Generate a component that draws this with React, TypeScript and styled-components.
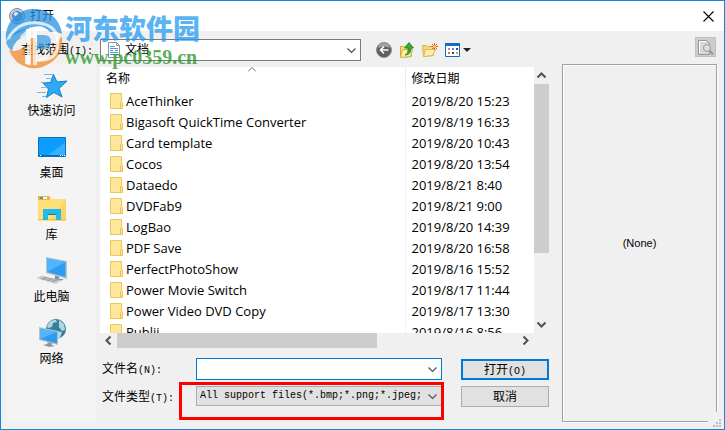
import React from "react";
import styled, { createGlobalStyle, css } from "styled-components";

const Global = createGlobalStyle`
  *, *::before, *::after { box-sizing: border-box; }
  body {
    margin: 0;
    font-family: "Noto Sans", "Noto Sans CJK SC", sans-serif;
    font-size: 12px;
    line-height: 16px;
    color: #000;
  }
  button, input, select { font: inherit; color: inherit; margin: 0; padding: 0; }
`;

const Dialog = styled.main`
  position: relative;
  display: flex;
  flex-direction: column;
  height: 100vh;
  min-height: 360px;
  border: 1px solid #1883d7;
  background: #f0f0f0;
`;

const TitleBar = styled.header`
  display: flex;
  align-items: center;
  gap: 5px;
  flex: none;
  height: 30px;
  padding: 0 10px 0 8px;
  background: #fff;
`;

const Title = styled.h1`
  flex: 1;
  margin: 0;
  font-size: 12px;
  font-weight: 400;
`;

const PlainButton = styled.button`
  display: flex;
  align-items: center;
  justify-content: center;
  border: 0;
  background: none;
`;

const Body = styled.div`
  display: flex;
  gap: 13px;
  flex: 1;
  min-height: 0;
  padding: 6px 7px 6px 6px;
`;

const Browser = styled.div`
  display: flex;
  flex-direction: column;
  gap: 2px;
  flex: 1;
  min-width: 0;
`;

const LookInBar = styled.div`
  display: flex;
  align-items: center;
  flex: none;
  padding-top: 2px;
`;

const Label = styled.label`
  white-space: nowrap;
`;

const LookInLabel = styled(Label)`
  flex: none;
  width: 93px;
  padding-left: 14px;
`;

const Mono = styled.span`
  font-family: "Liberation Mono", monospace;
  font-size: 10px;
  line-height: 10px;
`;

const Combo = styled.div<{ $tone: "plain" | "focus" | "grey" }>`
  display: flex;
  align-items: center;
  flex: 1;
  min-width: 0;
  min-height: ${(p) => (p.$tone === "grey" ? 20 : 22)}px;
  padding-right: 3px;
  border: 1px solid ${(p) => ({ plain: "#7a7a7a", focus: "#0078d7", grey: "#adadad" })[p.$tone]};
  background: ${(p) => (p.$tone === "grey" ? "#e1e1e1" : "#fff")};
`;

const field = css`
  flex: 1;
  min-width: 0;
  height: 18px;
  border: 0;
  outline: 0;
  background: none;
  appearance: none;
`;

const Select = styled.select<{ $mono?: boolean }>`
  ${field}
  padding-left: ${(p) => (p.$mono ? 3 : 4)}px;
  ${(p) => p.$mono && css`
    font-family: "Liberation Mono", monospace;
    font-size: 10px;
  `}
`;

const TextInput = styled.input`
  ${field}
  padding-left: 4px;
`;

const DocIcon = styled.svg`
  flex: none;
  margin-left: 6px;
`;

const Tools = styled.div`
  display: flex;
  align-items: center;
  gap: 7px;
  flex: none;
  width: 188px;
  padding-left: 15px;
`;

const Panes = styled.div`
  display: flex;
  gap: 4px;
  flex: 1;
  min-height: 0;
`;

const Places = styled.nav`
  display: flex;
  flex-direction: column;
  gap: 13px;
  flex: none;
  width: 89px;
  padding-top: 7px;
  background: #f4f4f4;
`;

const Place = styled(PlainButton)`
  flex-direction: column;
  gap: 1px;
`;

const Main = styled.div`
  display: flex;
  flex-direction: column;
  flex: 1;
  min-width: 0;
  padding-top: 4px;
`;

const ListFrame = styled.div`
  display: grid;
  grid-template: minmax(0, 1fr) 15px / minmax(0, 1fr) 15px;
  flex: 1;
  min-height: 0;
`;

const ListView = styled.div`
  overflow: hidden;
  background: #fff;
`;

const Files = styled.table`
  width: 100%;
  border-collapse: collapse;
  table-layout: fixed;
`;

const Head = styled.th<{ $sorted?: boolean }>`
  position: relative;
  height: 23px;
  padding: 0 6px;
  font-weight: 400;
  text-align: left;
  width: ${(p) => (p.$sorted ? "auto" : "129px")};
  border-left: ${(p) => (p.$sorted ? "0" : "1px solid #e3eef8")};
`;

const SortMark = styled.svg`
  position: absolute;
  top: 0;
  left: 50%;
  transform: translateX(-50%);
`;

const Cell = styled.td`
  height: 21px;
  padding: 0 6px;
  font-family: "Open Sans", "Noto Sans", sans-serif;
  font-size: 13px;
  white-space: nowrap;
  & + & { border-left: 1px solid #eff5fb; }
`;

const FileName = styled.span`
  display: flex;
  align-items: center;
  gap: 3px;
  padding-left: 4px;
`;

const ScrollBar = styled.div<{ $vertical?: boolean }>`
  display: flex;
  flex-direction: ${(p) => (p.$vertical ? "column" : "row")};
`;

const ScrollButton = styled(PlainButton)`
  flex: 0 0 17px;
`;

const Track = styled.div<{ $vertical?: boolean }>`
  flex: 1;
  display: flex;
  flex-direction: ${(p) => (p.$vertical ? "column" : "row")};
`;

const Thumb = styled.div<{ $share: number }>`
  flex: 0 0 ${(p) => p.$share}%;
  background: #cdcdcd;
`;

const Form = styled.form`
  display: grid;
  grid-template-columns: 94px minmax(0, 1fr) 88px;
  row-gap: 6px;
  flex: none;
  align-items: start;
  padding: 10px 0 16px 2px;
`;

const FormLabel = styled(Label)`
  padding-top: 3px;
`;

const Highlighted = styled.div`
  position: relative;
  display: flex;
  &::after {
    content: "";
    position: absolute;
    inset: -4px -2px -14px -17px;
    border: 3px solid #f00;
    pointer-events: none;
  }
`;

const PushButton = styled.button<{ $primary?: boolean }>`
  height: 21px;
  margin-top: ${(p) => (p.$primary ? 1 : 0)}px;
  border: ${(p) => (p.$primary ? "2px solid #0078d7" : "1px solid #adadad")};
  background: #e1e1e1;
  line-height: 16px;
`;

const FieldCell = styled.div`
  display: flex;
  flex-direction: column;
  padding-right: 19px;
`;

const PreviewColumn = styled.aside`
  display: flex;
  flex-direction: column;
  align-items: flex-end;
  gap: 7px;
  flex: none;
  width: 155px;
`;

const PreviewButton = styled(PlainButton)`
  width: 21px;
  height: 20px;
  margin-right: 1px;
  background: #ccc;
  border: 1px solid #c0c0c0;
`;

const Preview = styled.div`
  display: flex;
  align-items: center;
  justify-content: center;
  flex: 1;
  width: 100%;
  margin-bottom: 1px;
  border: 1px solid #a0a0a0;
  box-shadow: 1px 1px 0 #fff, inset 1px 1px 0 #fff;
  font-family: "Liberation Sans", sans-serif;
  font-size: 11px;
`;

const Grip = styled.svg`
  position: absolute;
  right: 0;
  bottom: 0;
  background: #f0f0f0;
`;

const Watermark = styled.div`
  position: absolute;
  top: 8px;
  left: 3px;
  display: flex;
  gap: 1px;
  pointer-events: none;
`;

const WatermarkText = styled.div`
  display: flex;
  flex-direction: column;
  gap: 2px;
  padding-top: 2px;
  white-space: nowrap;
`;

const WatermarkName = styled.span`
  font-family: "Noto Sans CJK SC", sans-serif;
  font-size: 27px;
  line-height: 34px;
  font-weight: 900;
  color: rgba(36, 154, 240, 0.75);
`;

const WatermarkUrl = styled.span`
  font-family: "Liberation Serif", serif;
  font-size: 20px;
  line-height: 20px;
  font-weight: 700;
  color: rgba(45, 155, 45, 0.8);
`;

function Chevron({ dir = "down", heavy = false }: { dir?: "down" | "up" | "left" | "right"; heavy?: boolean }) {
  const paths = {
    down: "M1.5 3.5 5.5 7.5 9.5 3.5",
    up: "M1.5 7.5 5.5 3.5 9.5 7.5",
    left: "M7.5 1.5 3.5 5.5 7.5 9.5",
    right: "M3.5 1.5 7.5 5.5 3.5 9.5",
  };
  return (
    <svg width="11" height="11" viewBox="0 0 11 11" fill="none" stroke="#505050" strokeWidth={heavy ? 2 : 1.2} aria-hidden>
      <path d={paths[dir]} />
    </svg>
  );
}

function FolderIcon() {
  return (
    <svg width="13" height="16" viewBox="0 0 13 16" aria-hidden>
      <path d="M.5.5h11v15H.5z" fill="#ffe699" stroke="#ebc659" />
      <path d="M10.500 15.500v-6l1-1 1 1v6z" fill="#ffe89f" stroke="#e8c04c" />
    </svg>
  );
}

function StarIcon() {
  return (
    <svg width="32" height="32" viewBox="0 0 32 32" aria-hidden>
      <path d="M17.500 4.500l3.500 7.500 10-1-8 7.500 3 8.500-8-4.500-7.500 5 2-8.500-5.500-6 7.500-.5z" fill="#2fa9f6" stroke="#1580c4" />
      <path d="M8 4.500h9M10 8.500h6M5 12.500h4M5 17.500h5M1 22.500h9M6 26.500h4" stroke="#7ab8df" />
    </svg>
  );
}

function DesktopIcon() {
  return (
    <svg width="32" height="32" viewBox="0 0 32 32" aria-hidden>
      <path d="M2.500 5.500h27v19h-27z" fill="#0d9dfd" stroke="#0873bd" />
      <path d="M29 11v12H12z" fill="#36b0ff" />
      <path d="M3 23.500h26" stroke="#086cb2" />
      <path d="M4 23.500h1M24 23.500h1M26 23.500h1M28 23.500h1" stroke="#fff" />
    </svg>
  );
}

function LibraryIcon() {
  return (
    <svg width="32" height="32" viewBox="0 0 32 32" aria-hidden>
      <path d="M2 3h11l2 2h15v22H2z" fill="#ffdf79" />
      <path d="M30 5v22H14z" fill="#fcd462" />
      <path d="M2 2h11l1.500 2-1.500 2H2z" fill="#eeb62c" />
      <path d="M4 3h7v2H4z" fill="#fff" />
      <path d="M4 3h3v2H4z" fill="#20a6df" />
      <path d="M2 25h28v1H2z" fill="#eec44e" />
      <path d="M7 26V15h18v11h-5v-6h-8v6z" fill="#22b9ee" />
      <path d="M12 20h8v1h-8z" fill="#087fb5" />
    </svg>
  );
}

function ComputerIcon() {
  return (
    <svg width="32" height="32" viewBox="0 0 32 32" aria-hidden>
      <path d="M10 1l21 4v18L10 17z" fill="#b7c3ca" />
      <path d="M11 2.500l18.500 3.500v15L11 16z" fill="#2b9df4" />
      <path d="M11 2.500l18.500 3.500L11 16z" fill="#51b5fb" />
      <path d="M19 19.500l4 1v2l5 1-5 2-7-2 3-1.500z" fill="#87959e" />
      <path d="M0 22l6-2.500 19 5-5 3.500z" fill="#c9d0d4" />
      <path d="M4 22l15 4M7 21l15 4M6 24l5-3M11 25l5-3M16 26l5-3" stroke="#899399" strokeWidth=".7" />
    </svg>
  );
}

function NetworkIcon() {
  return (
    <svg width="32" height="32" viewBox="0 0 32 32" aria-hidden>
      <circle cx="20" cy="11" r="10" fill="#357f9e" />
      <path d="M11 8q3-7 9-6l1 2-4 1-1 4-4 1zM23 2l5 4 1 6-3 1-3-4zM21 13l5 1-2 6-4 0z" fill="#b3d6df" />
      <path d="M3 9l19 4v14L3 22z" fill="#b5c2c8" />
      <path d="M4 10.500l17 3.500v11.500L4 21z" fill="#2a9bed" />
      <path d="M4 10.500l17 3.500L4 21z" fill="#54b6f8" />
      <path d="M12 24l4 1v2l3 1-6 1-6-2 4-1z" fill="#8c999f" />
    </svg>
  );
}

const places = [
  { name: "快速访问", Icon: StarIcon },
  { name: "桌面", Icon: DesktopIcon },
  { name: "库", Icon: LibraryIcon },
  { name: "此电脑", Icon: ComputerIcon },
  { name: "网络", Icon: NetworkIcon },
];

const files = [
  ["AceThinker", "2019/8/20 15:23"],
  ["Bigasoft QuickTime Converter", "2019/8/19 16:33"],
  ["Card template", "2019/8/20 10:43"],
  ["Cocos", "2019/8/20 13:54"],
  ["Dataedo", "2019/8/21 8:40"],
  ["DVDFab9", "2019/8/21 9:00"],
  ["LogBao", "2019/8/20 14:39"],
  ["PDF Save", "2019/8/20 16:58"],
  ["PerfectPhotoShow", "2019/8/16 15:52"],
  ["Power Movie Switch", "2019/8/17 11:44"],
  ["Power Video DVD Copy", "2019/8/17 13:30"],
  ["Publii", "2019/8/16 8:56"],
];

function Toolbar() {
  return (
    <Tools>
      <PlainButton type="button" aria-label="后退">
        <svg width="16" height="16" viewBox="0 0 16 16">
          <circle cx="8" cy="8" r="7.500" fill="#5f5f5f" stroke="#8d8d8d" />
          <path d="M2 6q1-5 6-5t6 5q-6-3-12 0z" fill="#a3a3a3" />
          <path d="M12.500 8H5M8 4.500L4.500 8 8 11.500" fill="none" stroke="#fff" strokeWidth="1.600" />
        </svg>
      </PlainButton>
      <PlainButton type="button" aria-label="向上一级">
        <svg width="16" height="16" viewBox="0 0 16 16">
          <path d="M1.500 4.500h4l1 1h6v9l-11 1z" fill="#f8df85" stroke="#d5ac3c" />
          <path d="M3.500 7.500h10l-2 7-10 1z" fill="#ffedab" stroke="#d8b54e" />
          <path d="M6 13q3.500-1 3-7H5.500l4.500-5.500L14.500 6H12q0 7-6 7z" fill="#35ac30" stroke="#16811b" strokeWidth=".8" />
        </svg>
      </PlainButton>
      <PlainButton type="button" aria-label="新建文件夹">
        <svg width="16" height="16" viewBox="0 0 16 16">
          <path d="M.5 3.500h4l1 1h6v9l-10 1z" fill="#f5d77b" stroke="#d7b354" />
          <path d="M3.500 7.500h10l-3 6-9 1z" fill="#ffebaa" stroke="#ddb95f" />
          <path d="M12.500 1v7M9 4.500h7M10 2l5 5M15 2l-5 5" stroke="#ee5130" />
          <circle cx="12.500" cy="4.500" r="1.500" fill="#ffd44d" />
        </svg>
      </PlainButton>
      <PlainButton type="button" aria-label="查看">
        <svg width="26" height="16" viewBox="0 0 26 16">
          <path d="M.5 1.500h14v13H.5z" fill="#fff" stroke="#126bcc" />
          <path d="M0 1h15v3H0z" fill="#126bcc" />
          <path d="M3 6h2v2H3z" fill="#9a9a9a" />
          <path d="M7 6h2v2H7z" fill="#8a70d5" />
          <path d="M11 6h2v2h-2z" fill="#284ebd" />
          <path d="M3 10h2v2H3z" fill="#e66b45" />
          <path d="M7 10h2v2H7z" fill="#253f91" />
          <path d="M11 10h2v2h-2z" fill="#d8a425" />
          <path d="M18 6h8l-4 4z" fill="#222" />
        </svg>
      </PlainButton>
    </Tools>
  );
}

function Emblem() {
  return (
    <svg width="60" height="60" viewBox="0 0 60 60" aria-hidden>
      <path d="M2 31A28 28 0 0 1 58 25Q52 22 46 23Q38 14 26 19Q10 25 2 31z" fill="#2690e0" opacity=".75" />
      <path d="M2 33Q8 22 22 20v7Q10 30 8 42 3 38 2 33z" fill="#2690e0" opacity=".7" />
      <path d="M58 27Q60 43 49 52T25 59Q10 55 5 41q8 3 16-4v18h5V29h6v24q14-2 18-12t8-14z" fill="#f08b2c" opacity=".75" />
      <path d="M33 26h7q7 0 7 7t-7 7h-7z" fill="#2690e0" opacity=".65" />
      <path d="M4 30Q14 12 34 14t20 20-20 17" fill="none" stroke="#fff" strokeWidth="3" opacity=".75" />
      <path d="M17 29l8-7v34M31 56V22" fill="none" stroke="#fff" strokeWidth="4" opacity=".7" />
    </svg>
  );
}

export default function App() {
  return (
    <Dialog>
      <Global />
      <TitleBar>
        <svg width="16" height="16" viewBox="0 0 16 16" aria-hidden>
          <circle cx="8" cy="8" r="7.500" fill="#c6cede" stroke="#7f8ba0" />
          <circle cx="8" cy="8" r="4.500" fill="#729ddb" stroke="#526d9a" />
          <circle cx="7" cy="6" r="2" fill="#dfefff" />
        </svg>
        <Title>打开</Title>
        <PlainButton type="button" aria-label="关闭">
          <svg width="11" height="11" viewBox="0 0 11 11" stroke="#000" strokeWidth="1.100">
            <path d="M.5.5l10 10M10.500.5l-10 10" />
          </svg>
        </PlainButton>
      </TitleBar>
      <Body>
        <Browser>
          <LookInBar>
            <LookInLabel htmlFor="look-in">查找范围<Mono>(I):</Mono></LookInLabel>
            <Combo $tone="plain">
              <DocIcon width="14" height="16" viewBox="0 0 14 16" aria-hidden>
                <path d="M1.500.5h8l3 3v12h-11z" fill="#fff" stroke="#8a959d" />
                <path d="M9.500.5v3h3" fill="none" stroke="#8a959d" />
                <path d="M3 4.500h5M3 6.500h8M3 8.500h3M8 8.500h3M3 10.500h8M3 12.500h8" stroke="#4b9ed6" />
              </DocIcon>
              <Select id="look-in"><option>文档</option></Select>
              <Chevron />
            </Combo>
            <Toolbar />
          </LookInBar>
          <Panes>
            <Places>
              {places.map(({ name, Icon }) => (
                <Place type="button" key={name}><Icon />{name}</Place>
              ))}
            </Places>
            <Main>
              <ListFrame>
                <ListView>
                  <Files>
                    <thead>
                      <tr>
                        <Head $sorted>
                          名称
                          <SortMark width="9" height="5" viewBox="0 0 9 5" fill="none" stroke="#6d6d6d" aria-hidden>
                            <path d="M.5 4.500l4-4 4 4" />
                          </SortMark>
                        </Head>
                        <Head>修改日期</Head>
                      </tr>
                    </thead>
                    <tbody>
                      {files.map(([name, date]) => (
                        <tr key={name}>
                          <Cell><FileName><FolderIcon />{name}</FileName></Cell>
                          <Cell>{date}</Cell>
                        </tr>
                      ))}
                    </tbody>
                  </Files>
                </ListView>
                <ScrollBar $vertical>
                  <ScrollButton type="button" aria-label="向上滚动"><Chevron dir="up" heavy /></ScrollButton>
                  <Track $vertical><Thumb $share={73} /></Track>
                  <ScrollButton type="button" aria-label="向下滚动"><Chevron heavy /></ScrollButton>
                </ScrollBar>
                <ScrollBar>
                  <ScrollButton type="button" aria-label="向左滚动"><Chevron dir="left" heavy /></ScrollButton>
                  <Track><Thumb $share={65} /></Track>
                  <ScrollButton type="button" aria-label="向右滚动"><Chevron dir="right" heavy /></ScrollButton>
                </ScrollBar>
              </ListFrame>
              <Form onSubmit={(e) => e.preventDefault()}>
                <FormLabel htmlFor="file-name">文件名<Mono>(N):</Mono></FormLabel>
                <FieldCell>
                  <Combo $tone="focus">
                    <TextInput id="file-name" type="text" />
                    <Chevron />
                  </Combo>
                </FieldCell>
                <PushButton type="submit" $primary>打开<Mono>(O)</Mono></PushButton>
                <FormLabel htmlFor="file-type">文件类型<Mono>(T):</Mono></FormLabel>
                <FieldCell>
                  <Highlighted>
                    <Combo $tone="grey">
                      <Select id="file-type" $mono><option>All support files(*.bmp;*.png;*.jpeg;</option></Select>
                      <Chevron />
                    </Combo>
                  </Highlighted>
                </FieldCell>
                <PushButton type="button">取消</PushButton>
              </Form>
            </Main>
          </Panes>
        </Browser>
        <PreviewColumn>
          <PreviewButton type="button" aria-label="预览">
            <svg width="17" height="17" viewBox="0 0 17 17" fill="none" aria-hidden>
              <path d="M1.500 1.500h8l3 3v11h-11z" fill="#d8d8d8" stroke="#999" />
              <path d="M2.500 14V2.500H9" stroke="#fff" />
              <circle cx="10" cy="9" r="3.500" fill="#ddd" stroke="#999" />
              <path d="M12.500 11.500l3.500 4" stroke="#999" strokeWidth="2" />
            </svg>
          </PreviewButton>
          <Preview>(None)</Preview>
        </PreviewColumn>
      </Body>
      <Grip width="16" height="17" viewBox="0 0 16 17" fill="#bfbfbf" aria-hidden>
        <path d="M11 7h2v2h-2zM8 10h2v2H8zM11 10h2v2h-2zM5 13h2v2H5zM8 13h2v2H8zM11 13h2v2h-2z" />
      </Grip>
      <Watermark>
        <Emblem />
        <WatermarkText>
          <WatermarkName>河东软件园</WatermarkName>
          <WatermarkUrl>www.pc0359.cn</WatermarkUrl>
        </WatermarkText>
      </Watermark>
    </Dialog>
  );
}
